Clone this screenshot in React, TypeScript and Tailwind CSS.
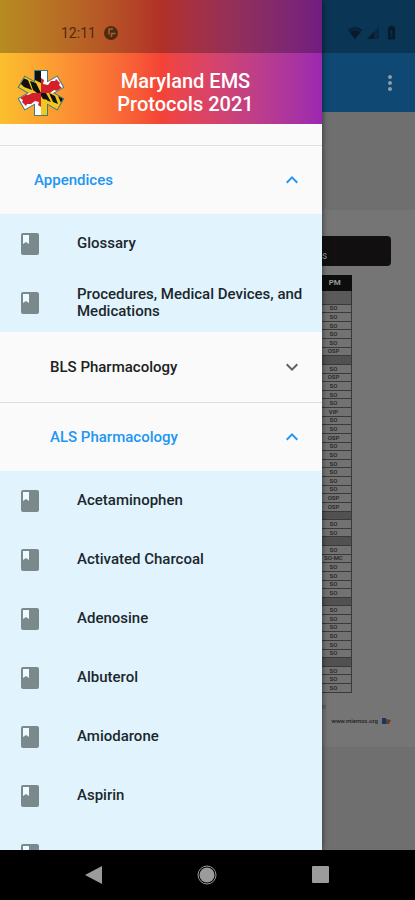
import React, { useState } from 'react';
import { MdExpandLess, MdExpandMore, MdMoreVert, MdBatteryAlert } from 'react-icons/md';

interface Section {
  id: string;
  title: string;
  nested: boolean;
  items: string[];
}

const SECTIONS: Section[] = [
  { id: 'appendices', title: 'Appendices', nested: false, items: ['Glossary', 'Procedures, Medical Devices, and Medications'] },
  { id: 'bls', title: 'BLS Pharmacology', nested: true, items: ['Aspirin', 'Epinephrine', 'Naloxone'] },
  {
    id: 'als',
    title: 'ALS Pharmacology',
    nested: true,
    items: ['Acetaminophen', 'Activated Charcoal', 'Adenosine', 'Albuterol', 'Amiodarone', 'Aspirin', ''],
  },
];

// PM column of the procedures table, an empty string is a group row
const PM_ROWS = [
  'SO', 'SO', 'SO', 'SO', 'SO', 'OSP', '',
  'SO', 'OSP', 'SO', 'SO', 'SO', 'VIP', 'SO', 'SO', 'OSP', 'SO', 'SO', 'SO', 'SO', 'SO', 'SO', 'OSP', 'OSP', '',
  'SO', 'SO', '',
  'SO', 'SO-MC', 'SO', 'SO', 'SO', 'SO', '',
  'SO', 'SO', 'SO', 'SO', 'SO', 'SO', '',
  'SO', 'SO', 'SO',
];

const Logo: React.FC = () => (
  <svg viewBox="0 0 48 48" className="h-12 w-12 shrink-0" aria-label="Maryland EMS">
    <defs>
      <clipPath id="star">
        <rect x="18" y="2" width="12" height="44" />
        <rect x="18" y="2" width="12" height="44" transform="rotate(60 24 24)" />
        <rect x="18" y="2" width="12" height="44" transform="rotate(-60 24 24)" />
      </clipPath>
    </defs>
    <g fill="#3f7d7c" stroke="#3f7d7c" strokeWidth="2">
      <rect x="18" y="2" width="12" height="44" />
      <rect x="18" y="2" width="12" height="44" transform="rotate(60 24 24)" />
      <rect x="18" y="2" width="12" height="44" transform="rotate(-60 24 24)" />
    </g>
    <g clipPath="url(#star)">
      <rect width="24" height="24" fill="#f3c71c" />
      <rect x="24" y="24" width="24" height="24" fill="#f3c71c" />
      <rect x="24" width="24" height="24" fill="#fff" />
      <rect y="24" width="24" height="24" fill="#fff" />
      <g fill="#111">
        <path d="M18 0h6v14l-6-3z" />
        <path d="M6 9l5 2 4 10-8-3-4-4z" />
        <path d="M13 12l6 2 5 10h-4l-4-3z" />
        <path d="M24 24l5 0 5 9-5-2z" />
        <path d="M32 24l6 3 3 8-5-2z" />
        <path d="M41 27l6 3-3 4z" />
      </g>
      <g fill="#d3202b">
        <path d="M24 9l3 2-1 4 5 1 3-4 4 0 1-2 4 4-1 2 3 3-5 3-3-1-4 3H24z" />
        <path d="M24 24v14l-3-2 1-3-4-1-4 3-4 0-1 2-4-4 1-2-3-2 5-4 3 1 4-2z" />
      </g>
      <path d="M24 30h6v16h-6z" fill="#f3c71c" />
      <path d="M24 24h4l3 7-5-1-2-3z" fill="#111" />
    </g>
  </svg>
);

const BookIcon: React.FC = () => (
  <svg viewBox="0 0 18 22" className="h-[22px] w-[18px] shrink-0" aria-hidden="true">
    <rect width="18" height="22" rx="2" fill="#7a898c" />
    <path d="M2 2h6v9L5 9l-3 2z" fill="#eefaff" />
  </svg>
);

const DrawerSection: React.FC<{ section: Section; open: boolean; onToggle: () => void }> = ({ section, open, onToggle }) => (
  <section>
    <h2>
      <button
        onClick={onToggle}
        aria-expanded={open}
        className={`flex h-[68px] w-full items-center justify-between pr-[18px] text-left text-[15px] font-medium ${section.nested ? 'pl-[50px]' : 'pl-[34px]'} ${open ? 'text-[#2196f3]' : 'text-[#212121]'}`}
      >
        {section.title}
        {open ? <MdExpandLess size={24} /> : <MdExpandMore size={24} className="text-[#616161]" />}
      </button>
    </h2>
    {open && (
      <ul className="bg-[#e1f4fe]">
        {section.items.map(item => (
          <li key={item}>
            <a href="#" className="flex h-[59px] items-center gap-[38px] pr-4 pl-[21px] text-[15px] leading-[17px] font-medium text-[#1c272c]">
              <BookIcon />
              <span>{item}</span>
            </a>
          </li>
        ))}
      </ul>
    )}
  </section>
);

const ProtocolPage: React.FC = () => (
  <main className="flex min-w-0 flex-1 flex-col overflow-hidden bg-[#6f6f6f]">
    <header className="bg-[#0f4873]">
      <div className="flex h-[53px] items-center justify-end gap-[3px] bg-[#0b3555] pt-3 pr-[15px] text-[#071b2c]">
        <svg viewBox="0 0 16 13" className="h-[13px] w-4" fill="currentColor">
          <path d="M1 4.500a10 10 0 0 1 14 0L8 13z" opacity=".55" />
          <path d="M2.800 6.500a8 8 0 0 1 10.400 0L8 13z" />
          <path d="M1 4.500a10 10 0 0 1 14 0" fill="none" stroke="currentColor" />
        </svg>
        <svg viewBox="0 0 14 14" className="h-[14px] w-[14px]" fill="currentColor">
          <path d="M13 1v12H1z" opacity=".45" />
          <path d="M8 6v7H1z" />
        </svg>
        <MdBatteryAlert size={17} />
      </div>
      <div className="flex h-[59px] items-center justify-end pr-[13px]">
        <button aria-label="More options" className="text-[#8f9ba5]">
          <MdMoreVert size={24} />
        </button>
      </div>
    </header>
    <div className="mt-[98px] flex h-[537px] shrink-0 flex-col bg-[#757575] pt-[26px]">
      <div className="mr-6 h-[30px] rounded-r bg-[#120f10] pt-3 text-[10px] text-[#999]">s</div>
      <table className="mt-[9px] h-[418px] w-[30px] border-collapse text-center text-[6px] leading-[6px] font-medium text-[#222]">
        <thead>
          <tr className="h-4 bg-[#0d0d0d] text-[8px] text-[#999]">
            <th className="p-0 pr-1">PM</th>
          </tr>
        </thead>
        <tbody>
          <tr className="h-[13px] bg-[#5a5a5a]">
            <td className="border-r border-[#333] p-0" />
          </tr>
          {PM_ROWS.map((value, i) => (
            <tr key={i} className={value ? 'bg-[#727272]' : 'bg-[#515151]'}>
              <td className="border-y border-r border-[#3a3a3a] p-0 pr-[6px]">{value || '\u00a0'}</td>
            </tr>
          ))}
        </tbody>
      </table>
      <p className="mt-[9px] text-[7px] leading-[10px] text-[#444]">n</p>
      <footer className="mt-1 flex items-center justify-end gap-1 pr-6 text-[6px] leading-[10px] font-medium text-[#222]">
        <a href="#">www.miemss.org</a>
        <svg viewBox="0 0 9 6" className="h-[6px] w-[9px]">
          <path d="M0 0h4v6H0z" fill="#173666" />
          <path d="M4 1l5 1-2 4H4z" fill="#63402c" />
        </svg>
      </footer>
    </div>
  </main>
);

const App: React.FC = () => {
  const [open, setOpen] = useState<string[]>(['appendices', 'als']);

  const toggle = (id: string) => {
    setOpen(open.includes(id) ? open.filter(o => o !== id) : [...open, id]);
  };

  return (
    <div className="flex h-screen flex-col overflow-hidden bg-black font-[Roboto,sans-serif]">
      <div className="flex min-h-0 flex-1">
        <aside className="z-10 flex w-[322px] shrink-0 flex-col bg-[#fafafa] shadow-[0_0_6px_rgba(0,0,0,0.6)]">
          <header className="bg-linear-to-r from-[#fbc02d] via-[#f44336] to-[#9c27b0]">
            <div className="flex h-[53px] items-center gap-2 bg-black/27 pt-3 pl-[61px] text-sm text-[#4e2c12]">
              <span className="w-[34px]">12:11</span>
              <svg viewBox="0 0 16 16" className="h-4 w-4">
                <circle cx="8" cy="8" r="7" fill="currentColor" />
                <path d="M6 3.500v6M6 4h4M8.500 12V8.500h4" fill="none" stroke="#a8602a" strokeWidth="1.500" />
              </svg>
            </div>
            <div className="flex h-[71px] items-center gap-4 pt-2 pr-8 pl-[17px]">
              <Logo />
              <h1 className="flex-1 px-6 text-center text-xl leading-[23px] font-medium text-white">
                Maryland EMS Protocols 2021
              </h1>
            </div>
          </header>
          <nav className="min-h-0 flex-1 overflow-hidden">
            <div className="h-[22px] border-b border-[#dedede]" />
            <DrawerSection section={SECTIONS[0]} open={open.includes('appendices')} onToggle={() => toggle('appendices')} />
            <div className="border-b border-[#dedede] py-px">
              <DrawerSection section={SECTIONS[1]} open={open.includes('bls')} onToggle={() => toggle('bls')} />
            </div>
            <DrawerSection section={SECTIONS[2]} open={open.includes('als')} onToggle={() => toggle('als')} />
          </nav>
        </aside>
        <ProtocolPage />
      </div>
      <footer className="flex h-[50px] shrink-0 items-center justify-around px-[37px] text-[#9b9b9b]">
        <button aria-label="Back">
          <svg viewBox="0 0 20 20" className="h-5 w-5" fill="currentColor">
            <path d="M18 1v18L1 10z" />
          </svg>
        </button>
        <button aria-label="Home">
          <svg viewBox="0 0 20 20" className="h-5 w-5">
            <circle cx="10" cy="10" r="9" fill="none" stroke="currentColor" />
            <circle cx="10" cy="10" r="7.500" fill="currentColor" />
          </svg>
        </button>
        <button aria-label="Overview">
          <svg viewBox="0 0 20 20" className="h-5 w-5" fill="currentColor">
            <rect x="1" y="1" width="17" height="17" rx="1" />
          </svg>
        </button>
      </footer>
    </div>
  );
};

export default App;
